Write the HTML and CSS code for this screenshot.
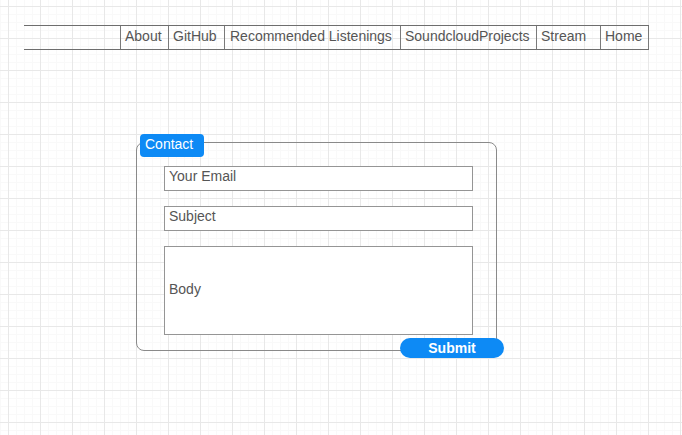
FILE: index.html
```html
<!DOCTYPE html>
<html lang="en">
<head>
<meta charset="utf-8">
<title>Contact</title>
<link rel="stylesheet" href="styles.css">
</head>
<body>
<nav class="nav">
  <div class="nav-blank"></div>
  <div class="nav-item w-about">About</div>
  <div class="nav-item w-github">GitHub</div>
  <div class="nav-item w-rec">Recommended Listenings</div>
  <div class="nav-item w-sc">SoundcloudProjects</div>
  <div class="nav-item w-stream">Stream</div>
  <div class="nav-item w-home">Home</div>
</nav>
<form class="contact">
  <div class="contact-label">Contact</div>
  <div class="field">Your Email</div>
  <div class="field">Subject</div>
  <div class="field field-body">Body</div>
  <div class="submit">Submit</div>
</form>
</body>
</html>
```
FILE: styles.css
```css
html, body {
  margin: 0;
  padding: 0;
}
body {
  width: 682px;
  height: 435px;
  overflow: hidden;
  font-family: "Liberation Sans", Arial, sans-serif;
  font-size: 14px;
  color: #555;
  background-color: #fff;
  background-image:
    linear-gradient(to right, #e8e8e8 1px, transparent 1px),
    linear-gradient(to bottom, #e8e8e8 1px, transparent 1px),
    linear-gradient(to right, #f9f9f9 1px, transparent 1px),
    linear-gradient(to bottom, #f9f9f9 1px, transparent 1px);
  background-size: 32px 32px, 32px 32px, 8px 8px, 8px 8px;
  background-position: 8px 6px, 8px 6px, 8px 6px, 8px 6px;
}
.nav {
  display: flex;
  margin: 25px 0 0 24px;
  width: 625px;
  height: 25px;
  box-sizing: border-box;
  border-top: 1px solid #6e6e6e;
  border-bottom: 1px solid #6e6e6e;
}
.nav-blank {
  width: 96px;
}
.nav-item {
  box-sizing: border-box;
  border-left: 1px solid #7a7a7a;
  padding-left: 4px;
  line-height: 20px;
  white-space: nowrap;
}
.w-about { width: 48px; }
.w-github { width: 56px; }
.w-rec { width: 176px; padding-left: 5px; }
.w-sc { width: 136px; }
.w-stream { width: 64px; }
.w-home { width: 49px; border-right: 1px solid #7a7a7a; }

.contact {
  position: relative;
  display: flex;
  flex-direction: column;
  gap: 15px;
  box-sizing: border-box;
  margin: 92px 0 0 136px;
  width: 361px;
  height: 209px;
  padding: 23px 0 0 27px;
  border: 1px solid #8a8a8a;
  border-radius: 8px;
}
.contact-label {
  position: absolute;
  left: 3px;
  top: -9px;
  width: 64px;
  height: 23px;
  box-sizing: border-box;
  padding-left: 5px;
  line-height: 21px;
  background: #0d8af5;
  color: #fff;
  border-radius: 4px;
}
.field {
  box-sizing: border-box;
  width: 309px;
  height: 25px;
  border: 1px solid #959595;
  padding-left: 4px;
  line-height: 19px;
  background: #fff;
}
.field-body {
  height: 89px;
  display: flex;
  align-items: center;
  padding-bottom: 3px;
  line-height: normal;
}
.submit {
  position: absolute;
  left: 263px;
  top: 195px;
  width: 104px;
  height: 20px;
  border-radius: 10px;
  background: #0d8af5;
  color: #fff;
  font-weight: bold;
  text-align: center;
  line-height: 20px;
}
```
